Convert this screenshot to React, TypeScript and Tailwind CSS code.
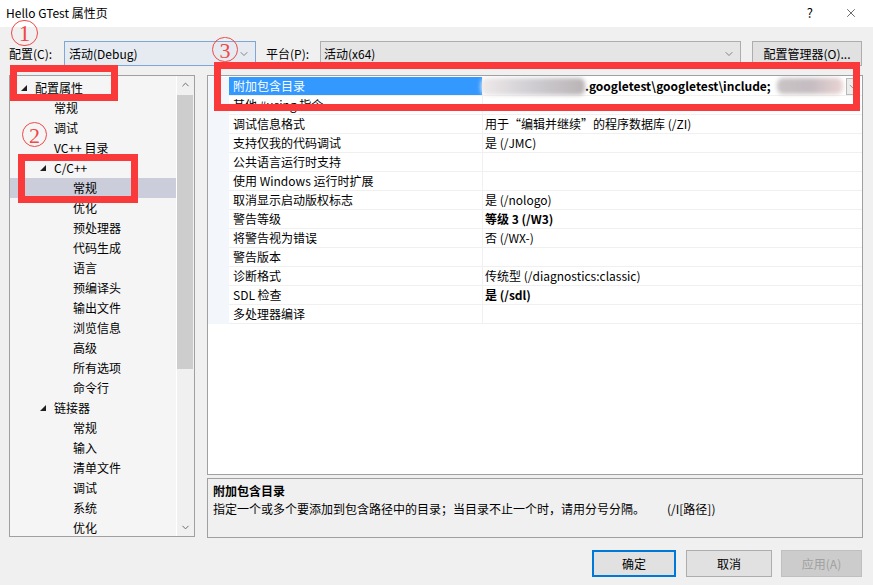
import React from "react";
import { ChevronDown, ChevronUp, X } from "lucide-react";

const Tri = () => (
  <svg width="6" height="6" viewBox="0 0 6 6" className="block">
    <polygon points="6,0 6,6 0,6" fill="#1e1e1e" />
  </svg>
);

type TreeItem = { label: string; level: 0 | 1 | 2; parent?: boolean; selected?: boolean };

const tree: TreeItem[] = [
  { label: "配置属性", level: 0, parent: true },
  { label: "常规", level: 1 },
  { label: "调试", level: 1 },
  { label: "VC++ 目录", level: 1 },
  { label: "C/C++", level: 1, parent: true },
  { label: "常规", level: 2, selected: true },
  { label: "优化", level: 2 },
  { label: "预处理器", level: 2 },
  { label: "代码生成", level: 2 },
  { label: "语言", level: 2 },
  { label: "预编译头", level: 2 },
  { label: "输出文件", level: 2 },
  { label: "浏览信息", level: 2 },
  { label: "高级", level: 2 },
  { label: "所有选项", level: 2 },
  { label: "命令行", level: 2 },
  { label: "链接器", level: 1, parent: true },
  { label: "常规", level: 2 },
  { label: "输入", level: 2 },
  { label: "清单文件", level: 2 },
  { label: "调试", level: 2 },
  { label: "系统", level: 2 },
  { label: "优化", level: 2 },
];

const padByLevel = ["pl-[11px]", "pl-[30px]", "pl-[49px]"];

type Row = { name: string; value?: string; bold?: boolean };
const rows: Row[] = [
  { name: "附加包含目录" },
  { name: "其他 #using 指令", value: "" },
  { name: "调试信息格式", value: "用于“编辑并继续”的程序数据库 (/ZI)" },
  { name: "支持仅我的代码调试", value: "是 (/JMC)" },
  { name: "公共语言运行时支持", value: "" },
  { name: "使用 Windows 运行时扩展", value: "" },
  { name: "取消显示启动版权标志", value: "是 (/nologo)" },
  { name: "警告等级", value: "等级 3 (/W3)", bold: true },
  { name: "将警告视为错误", value: "否 (/WX-)" },
  { name: "警告版本", value: "" },
  { name: "诊断格式", value: "传统型 (/diagnostics:classic)" },
  { name: "SDL 检查", value: "是 (/sdl)", bold: true },
  { name: "多处理器编译", value: "" },
];

export default function App() {
  return (
    <div className="relative w-[873px] h-[585px] overflow-hidden bg-[#f0f0f0] text-[12px] text-black font-['Segoe_UI','Noto_Sans_CJK_SC',sans-serif]">
      {/* Title bar */}
      <div className="h-[27px] bg-white flex items-center pb-[2px]">
        <span className="pl-[6px]">Hello GTest 属性页</span>
        <span className="ml-auto mr-[31px] text-[13px]">?</span>
        <X size={14} strokeWidth={1} className="mr-[15px]" />
      </div>

      {/* Toolbar */}
      <div className="mt-[14px] flex items-center h-[25px] pl-[9px]">
        <span className="w-[55px] leading-[14px]">配置(C):</span>
        <div className="w-[192px] h-[25px] border border-[#7ea6d6] bg-[#e6ebf1] flex items-center pl-[4px] pr-[5px]">
          <span>活动(Debug)</span>
          <ChevronDown size={12} strokeWidth={1.5} className="ml-auto text-[#606060]" />
        </div>
        <span className="ml-[10px] w-[54px]">平台(P):</span>
        <div className="w-[421px] h-[25px] border border-[#adadad] bg-[#e5e5e5] flex items-center pl-[3px] pr-[5px]">
          <span>活动(x64)</span>
          <ChevronDown size={12} strokeWidth={1.5} className="ml-auto text-[#606060]" />
        </div>
        <div className="ml-[11px] w-[110px] h-[25px] border border-[#adadad] bg-[#e1e1e1] flex items-center justify-center">
          配置管理器(O)...
        </div>
      </div>

      {/* Main */}
      <div className="mt-[9px] flex">
        {/* Tree */}
        <div className="ml-[9px] w-[186px] h-[462px] border border-[#a0a0a0] flex bg-[#f5f5f5]">
          <div className="flex-1 overflow-hidden pt-[2px] border-r border-white">
            {tree.map((t, i) => (
              <div
                key={i}
                className={`h-[20px] flex items-center ${padByLevel[t.level]} ${t.selected ? "bg-[#cbcdda]" : ""}`}
              >
                <div className="w-[14px] flex items-center">{t.parent ? <Tri /> : null}</div>
                <span className="leading-[20px] whitespace-nowrap">{t.label}</span>
              </div>
            ))}
          </div>
          <div className="w-[17px] bg-[#f0f0f0] flex flex-col">
            <div className="h-[17px] flex items-center justify-center">
              <ChevronUp size={11} strokeWidth={2} className="text-[#606060]" />
            </div>
            <div className="mt-[2px] h-[274px] mr-[1px] bg-[#cdcdcd]" />
            <div className="mt-auto h-[17px] flex items-center justify-center">
              <ChevronDown size={11} strokeWidth={2} className="text-[#606060]" />
            </div>
          </div>
        </div>

        {/* Right side */}
        <div className="ml-[12px] w-[656px] flex flex-col">
          <div className="h-[400px] border border-[#a0a0a0] bg-white pt-[1px] overflow-hidden">
            {rows.map((r, i) => (
              <div key={i} className="h-[19px] flex">
                <div className="w-[21px] bg-[#f3f6fb]" />
                <div
                  className={`w-[253px] border-b border-[#f0f0f0] pl-[4px] leading-[18px] whitespace-nowrap ${
                    i === 0 ? "bg-[#3399ff] text-white border-[#3399ff]" : ""
                  }`}
                >
                  {r.name}
                </div>
                <div className="flex-1 border-l border-b border-[#f0f0f0] pl-[2px] leading-[18px] whitespace-nowrap flex items-center">
                  {i === 0 ? (
                    <>
                      <span className="-ml-[4px] w-[104px] h-[17px] rounded-[6px] blur-[2px] bg-linear-to-r from-[#efeaea] via-[#cfcdd2] to-[#b9b3b5]" />
                      <span className="font-bold">.googletest\googletest\include;</span>
                      <span className="ml-[6px] w-[66px] h-[16px] rounded-[6px] blur-[2px] bg-linear-to-r from-[#c9c3c6] via-[#c4bcc0] to-[#ead4d4]" />
                      <span className="ml-auto mr-[4px] w-[12px] h-[17px] border border-[#b8b8b8] bg-[#ececec] flex items-center justify-center">
                        <ChevronDown size={9} strokeWidth={1.5} className="text-[#505050]" />
                      </span>
                    </>
                  ) : (
                    <span className={r.bold ? "font-bold" : ""}>{r.value}</span>
                  )}
                </div>
              </div>
            ))}
          </div>

          {/* Description */}
          <div className="mt-[3px] h-[60px] border border-[#a0a0a0] bg-[#f0f0f0] px-[5px] pt-[3px]">
            <div className="font-bold leading-[18px]">附加包含目录</div>
            <div className="leading-[18px] whitespace-nowrap">
              指定一个或多个要添加到包含路径中的目录；当目录不止一个时，请用分号分隔。
              <span className="ml-[22px]">(/I[路径])</span>
            </div>
          </div>
        </div>
      </div>

      {/* Buttons */}
      <div className="mt-[12px] flex justify-end pr-[11px]">
        <div className="w-[84px] h-[27px] border-2 border-[#0078d7] bg-[#e1e1e1] flex items-center justify-center">确定</div>
        <div className="ml-[10px] w-[86px] h-[27px] border border-[#adadad] bg-[#e1e1e1] flex items-center justify-center">取消</div>
        <div className="ml-[9px] w-[81px] h-[27px] border border-[#bfbfbf] bg-[#cccccc] text-[#a0a0a0] flex items-center justify-center">应用(A)</div>
      </div>

      {/* Annotations */}
      <div className="absolute left-[10px] top-[65px] w-[108px] h-[36px] border-[7px] border-[#fa3a3a]" />
      <div className="absolute left-[18px] top-[154px] w-[120px] h-[49px] border-[7px] border-[#fa3a3a]" />
      <div className="absolute left-[214px] top-[62px] w-[646px] h-[49px] border-[7px] border-[#fa3a3a]" />

      <div className="absolute left-[11px] top-[20px] w-[27px] h-[26px] rounded-full border border-[#f04848] text-[#f04848] flex items-center justify-center font-['Liberation_Serif',serif] text-[23px] leading-[22px] pt-[1px]">1</div>
      <div className="absolute left-[22px] top-[122px] w-[25px] h-[25px] rounded-full border border-[#f04848] text-[#f04848] flex items-center justify-center font-['Liberation_Serif',serif] text-[22px] leading-[21px] pt-[1px]">2</div>
      <div className="absolute left-[212px] top-[37px] w-[26px] h-[25px] rounded-full border border-[#f04848] text-[#f04848] flex items-center justify-center font-['Liberation_Serif',serif] text-[22px] leading-[21px] pt-[1px]">3</div>
    </div>
  );
}
